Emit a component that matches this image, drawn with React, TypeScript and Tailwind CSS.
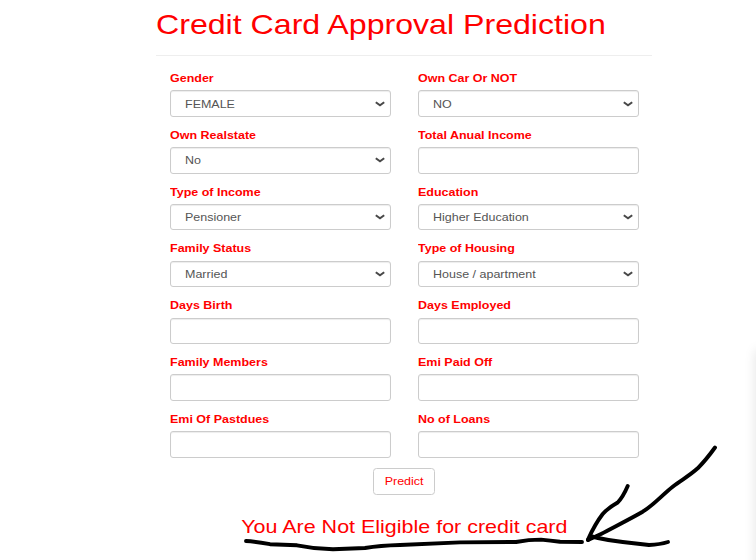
type FieldData = { label: string; value?: string };

const fields: FieldData[] = [
  { label: 'Gender', value: 'FEMALE' },
  { label: 'Own Car Or NOT', value: 'NO' },
  { label: 'Own Realstate', value: 'No' },
  { label: 'Total Anual Income' },
  { label: 'Type of Income', value: 'Pensioner' },
  { label: 'Education', value: 'Higher Education' },
  { label: 'Family Status', value: 'Married' },
  { label: 'Type of Housing', value: 'House / apartment' },
  { label: 'Days Birth' },
  { label: 'Days Employed' },
  { label: 'Family Members' },
  { label: 'Emi Paid Off' },
  { label: 'Emi Of Pastdues' },
  { label: 'No of Loans' },
];

const control =
  'h-[26.4px] w-full rounded-[3px] border border-[#ccc] bg-white shadow-[inset_0_1px_1px_rgba(0,0,0,0.075)] outline-none';

function Field({ label, value }: FieldData) {
  return (
    <div className="h-[56.8px]">
      <label className="mb-[3.4px] block h-4 origin-left scale-x-[1.135] whitespace-nowrap text-[11px] leading-[15px] font-bold text-[red]">
        {label}
      </label>
      {value ? (
        <button type="button" className={`${control} flex items-center justify-between pr-[5px] pl-[14.5px]`}>
          <span className="block origin-left scale-x-[1.135] whitespace-nowrap text-[11px] leading-4 text-[#555]">{value}</span>
          <svg width="10" height="6" viewBox="0 0 10 6" fill="none" stroke="#484848" strokeWidth="2">
            <path d="M0.8 1.2 5 4.3 9.2 1.2" />
          </svg>
        </button>
      ) : (
        <input className={`${control} block`} aria-label={label} />
      )}
    </div>
  );
}

function Scribble() {
  return (
    <svg
      className="pointer-events-none absolute inset-0"
      width="756"
      height="560"
      fill="none"
      stroke="#000"
      strokeWidth="3.9"
      strokeLinecap="round"
      strokeLinejoin="round"
    >
      <path d="M246 541 Q254 541.3 270 544.2 L297 545.3 Q315 549 333 549.3 L365 548 Q380 545.5 400 545 L460 542.4 L516 542 Q529 539.6 541 539.6 Q550 540.5 560 541.8 L582 542" />
      <path d="M715 447.5 Q706 460 697.7 468.3 C688 477 681 480 672.7 486.7 C662 495 655 504 642.7 511.7 C630 519 616 526 601 534 L588 540" />
      <path d="M627.7 486 Q623 497 617.7 502.5 Q608 508 602.7 514 Q595 524 588 539.5" />
      <path d="M588 540 L592 536.5 L598 538 Q609 540.5 622.7 542 L649 545 Q660 544.5 668 542" />
    </svg>
  );
}

export default function App() {
  return (
    <div className="relative h-[560px] w-[756px] overflow-hidden bg-white font-['Liberation_Sans',Arial,sans-serif]">
      <main className="ml-[156px] w-[496px]">
        <header className="h-14 border-b border-[#eee] pt-[9px]">
          <h1 className="origin-left scale-x-[1.147] whitespace-nowrap text-[28px] leading-8 font-normal text-[red]">
            Credit Card Approval Prediction
          </h1>
        </header>
        <form className="px-[13.5px] pt-[15px]">
          <div className="grid grid-cols-2 gap-x-[27px]">
            {fields.map((field) => (
              <Field key={field.label} {...field} />
            ))}
          </div>
          <div className="-mt-[0.6px] flex justify-center">
            <button type="button" className="h-[27px] w-[62px] rounded-[3.5px] border border-[#ccc] text-[11px] leading-4 text-[red]">
              <span className="inline-block scale-x-[1.135]">Predict</span>
            </button>
          </div>
        </form>
        <h2 className="mt-5 text-center text-[19px] leading-6 text-[red]">
          <span className="inline-block scale-x-[1.13] whitespace-nowrap">You Are Not Eligible for credit card</span>
        </h2>
      </main>
      <Scribble />
      <div className="absolute top-[350px] -right-2 h-[230px] w-2 shadow-[0_0_12px_rgba(0,0,0,0.13)]" />
    </div>
  );
}
